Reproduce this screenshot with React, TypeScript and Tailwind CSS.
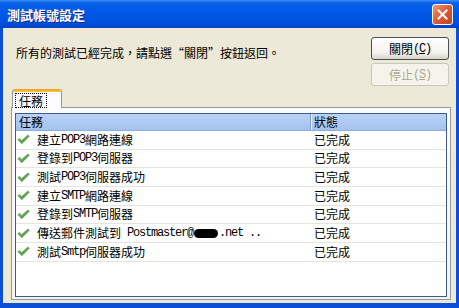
import React from "react";

const CJK = "font-['Noto_Sans_CJK_TC','Noto_Sans_CJK_SC',sans-serif]";

function Mixed({ text }: { text: string }) {
  const parts = text.split(/([\x20-\x7e]+)/).filter((p) => p.length > 0);
  return (
    <>
      {parts.map((p, i) =>
        /^[\x20-\x7e]+$/.test(p) ? (
          <span key={i} className="font-['Liberation_Mono',monospace] text-[12px] tracking-[-1.2px] whitespace-pre">
            {p}
          </span>
        ) : (
          <span key={i}>{p}</span>
        )
      )}
    </>
  );
}

function Check() {
  return (
    <svg width="13" height="11" viewBox="0 0 13 11" className="shrink-0">
      <defs>
        <linearGradient id="g" x1="0" y1="0" x2="1" y2="1">
          <stop offset="0" stopColor="#8ccb6a" />
          <stop offset="1" stopColor="#3a8d35" />
        </linearGradient>
      </defs>
      <path d="M0.8 5.6 L2.6 4.4 L4.8 6.5 L10.8 1 L12.3 2.2 L4.8 9.8 Z" fill="url(#g)" stroke="#3b7a33" strokeWidth="0.5" />
    </svg>
  );
}

const rows: { task: string; redact?: boolean }[] = [
  { task: "建立POP3網路連線" },
  { task: "登錄到POP3伺服器" },
  { task: "測試POP3伺服器成功" },
  { task: "建立SMTP網路連線" },
  { task: "登錄到SMTP伺服器" },
  { task: "傳送郵件測試到 Postmaster@", redact: true },
  { task: "測試Smtp伺服器成功" },
];

export default function App() {
  return (
    <div className={`w-[459px] h-[308px] flex flex-col bg-[#0A4FD6] ${CJK} text-[12px] text-black overflow-hidden`}>
      {/* Title bar */}
      <div className="h-[28px] shrink-0 flex items-center justify-between pl-[7px] pr-[6px] bg-[linear-gradient(to_bottom,#3D8DF7_0%,#0B62E6_10%,#0058E8_45%,#0052DE_80%,#0042C4_100%)]">
        <span className="text-white font-bold text-[13px] leading-none [text-shadow:1px_1px_0_#0B2E8A]">測試帳號設定</span>
        <div className="w-[21px] h-[21px] rounded-[3px] border border-white bg-[linear-gradient(to_bottom_right,#EE9A78,#DD5A35_50%,#C2401F)] flex items-center justify-center">
          <svg width="11" height="11" viewBox="0 0 11 11">
            <path d="M1.5 1.5 L9.5 9.5 M9.5 1.5 L1.5 9.5" stroke="white" strokeWidth="2" strokeLinecap="square" />
          </svg>
        </div>
      </div>

      {/* Body */}
      <div className="flex-1 flex flex-col bg-[#ECE9D8] ml-[3px] mr-[3px] mb-[5px]">
        <div className="flex justify-between pl-[13px] pr-[7px] pt-[9px]">
          <div className="mt-[8px] leading-[16px]">所有的測試已經完成，請點選“關閉”按鈕返回。</div>
          <div className="flex flex-col gap-[3px] w-[78px]">
            <div className="h-[23px] rounded-[3px] border border-[#45505e] bg-[linear-gradient(to_bottom,#FFFFFF,#F4F3EE_70%,#D8D4C8)] flex items-center justify-center leading-none">
              關閉<span className="font-['Liberation_Mono',monospace] text-[12px] tracking-[-1.2px]">(<span className="underline">C</span>)</span>
            </div>
            <div className="h-[23px] rounded-[3px] border border-[#C9C7BA] bg-[#F5F4EA] flex items-center justify-center leading-none text-[#ACA899]">
              停止<span className="font-['Liberation_Mono',monospace] text-[12px] tracking-[-1.2px]">(<span className="underline">S</span>)</span>
            </div>
          </div>
        </div>

        {/* Tab strip */}
        <div className="mt-[3px] pl-[9px] flex relative z-10">
          <div className="w-[50px] h-[19px] flex flex-col border-x border-[#919B9C] rounded-t-[3px] overflow-hidden bg-[#FCFCFE]">
            <div className="h-[3px] bg-[linear-gradient(to_bottom,#E6A01A,#FFC83C)] shrink-0" />
            <div className="flex-1 flex items-start pl-[2px] pt-[1px]">
              <div className="border border-dotted border-black px-[3px] leading-[13px] h-[15px]">任務</div>
            </div>
          </div>
        </div>

        {/* Panel */}
        <div className="flex-1 -mt-px ml-[8px] mr-[5px] mb-[3px] border border-[#919B9C] bg-[linear-gradient(to_bottom,#FCFCFE,#F4F3EE)] pt-[5px] px-[3px] pb-[2px] flex flex-col">
          <div className="flex-1 border border-[#3E5B8C] bg-white flex flex-col">
            <div className="h-[17px] shrink-0 flex bg-[linear-gradient(to_bottom,#B9D2F6,#A4C2EF)] border-b border-[#8EAEE0] leading-[16px]">
              <div className="w-[295px] pl-[3px] border-r border-[#7F9CCB]">任務</div>
              <div className="pl-[2px] border-l border-[#E8F0FC]">狀態</div>
            </div>
            {rows.map((r, i) => (
              <div key={i} className="h-[18.67px] shrink-0 flex items-center border-b border-[#E6E4DC]">
                <div className="w-[296px] flex items-center pl-[1px] gap-[7px] whitespace-nowrap">
                  <Check />
                  <span className="flex items-center">
                    <Mixed text={r.task} />
                    {r.redact && (
                      <>
                        <span className="inline-block w-[24px] h-[9px] bg-black rounded-full mx-[1px]" />
                        <Mixed text=".net .." />
                      </>
                    )}
                  </span>
                </div>
                <div className="pl-[2px]">已完成</div>
              </div>
            ))}
          </div>
        </div>
      </div>
    </div>
  );
}
